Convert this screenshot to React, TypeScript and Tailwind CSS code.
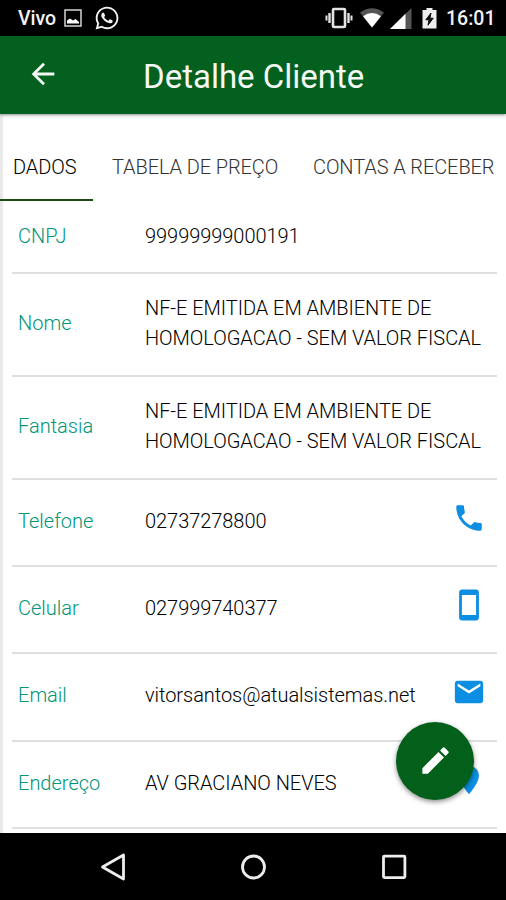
import { type ReactNode } from 'react';
import { FaWhatsapp } from 'react-icons/fa';
import { MdArrowBack, MdEmail, MdModeEdit, MdPhone, MdStayCurrentPortrait } from 'react-icons/md';

type Field = { label: string; lines: string[]; height: string; icon?: ReactNode };

const iconClass = 'w-[34px] h-[34px] text-[#0c8fe2]';

const pin = (
  <svg className={iconClass} viewBox="0 0 24 24" fill="currentColor">
    <path d="M12 2C8.13 2 5 5.13 5 9c0 5.25 7 13 7 13s7-7.75 7-13c0-3.87-3.13-7-7-7z" />
  </svg>
);

const fields: Field[] = [
  { label: 'CNPJ', lines: ['99999999000191'], height: 'h-[73px] pt-[2px]' },
  { label: 'Nome', lines: ['NF-E EMITIDA EM AMBIENTE DE', 'HOMOLOGACAO - SEM VALOR FISCAL'], height: 'h-[103px]' },
  { label: 'Fantasia', lines: ['NF-E EMITIDA EM AMBIENTE DE', 'HOMOLOGACAO - SEM VALOR FISCAL'], height: 'h-[103px]' },
  { label: 'Telefone', lines: ['02737278800'], height: 'h-[87px]', icon: <MdPhone className={iconClass} /> },
  { label: 'Celular', lines: ['027999740377'], height: 'h-[87px]', icon: <MdStayCurrentPortrait className={iconClass} /> },
  { label: 'Email', lines: ['vitorsantos@atualsistemas.net'], height: 'h-[88px]', icon: <MdEmail className={iconClass} /> },
  { label: 'Endereço', lines: ['AV GRACIANO NEVES'], height: 'h-[87px]', icon: pin },
];

function StatusBar() {
  return (
    <div className="flex h-9 shrink-0 items-center bg-black pl-[18px] pr-[11px] text-[#f2f2f2]">
      <span className="w-[46px] pt-[2px] text-[19.5px] font-medium leading-none">Vivo</span>
      <svg className="h-[18px] w-[18px]" viewBox="0 0 18 18" fill="none">
        <rect x="1" y="1" width="16" height="16" stroke="#c8c8c8" strokeWidth="1.6" />
        <path d="M3 14.5v-3l3-2 3 2 2.5-1.5 3.5 3v1.5z" fill="#fff" />
      </svg>
      <FaWhatsapp className="ml-[12px] h-[26px] w-[26px]" />
      <div className="ml-auto flex items-center">
        <svg className="h-[22px] w-[28px]" viewBox="0 0 28 22" fill="none" stroke="#e4e4e4">
          <rect x="8" y="2" width="12" height="18" rx="1" strokeWidth="2.6" />
          <path d="M4.5 6v10M23.5 6v10" strokeWidth="2.4" />
          <path d="M1.5 8.5v5M26.5 8.5v5" strokeWidth="2" />
        </svg>
        <svg className="ml-[7px] h-[20px] w-[24px]" viewBox="0 0 24 20">
          <path d="M0 4.5Q12-4 24 4.5L12 19.5z" fill="#555" />
          <path d="M3 8.2Q12 1.8 21 8.2L12 19.5z" fill="#fff" />
        </svg>
        <svg className="ml-[6px] h-[21px] w-[22px]" viewBox="0 0 22 21">
          <path d="M0 21L21.5 0v21z" fill="#555" />
          <path d="M0 21L15.5 5.8V21z" fill="#fff" />
        </svg>
        <svg className="ml-[10px] h-[21px] w-[15px]" viewBox="0 0 15 21">
          <path d="M4.5 0h6v2H14.5v18.5H.5V2h4z" fill="#eee" />
          <path d="M9 5L3.8 11.8h3.1L6 17.2l5.2-7H8z" fill="#111" stroke="#111" />
        </svg>
        <span className="ml-[9px] w-[49px] pt-[2px] text-[19.5px] font-medium leading-none">16:01</span>
      </div>
    </div>
  );
}

function Header() {
  return (
    <header className="z-10 flex h-[78px] shrink-0 items-center bg-[#03601e] text-[#f4f8f4] shadow-[0_1px_3px_rgba(0,0,0,0.45)]">
      <MdArrowBack className="ml-[26px] mt-[-3px] h-[34px] w-[34px]" />
      <h1 className="ml-[83px] whitespace-nowrap pt-[2px] text-[33px] leading-none">Detalhe Cliente</h1>
    </header>
  );
}

function Tabs() {
  return (
    <nav className="flex h-[87px] shrink-0 items-end whitespace-nowrap text-[20px] font-light leading-none tracking-[-0.1px] text-[#333]">
      <div className="flex h-[67px] w-[93px] items-center border-b-2 border-[#1c4a17] pl-[13px] text-black">DADOS</div>
      <div className="flex h-[67px] w-[201px] items-center border-b-2 border-transparent pl-[19px]">TABELA DE PREÇO</div>
      <div className="flex h-[67px] items-center border-b-2 border-transparent pl-[19px]">CONTAS A RECEBER</div>
    </nav>
  );
}

function Row({ field }: { field: Field }) {
  return (
    <div className={`ml-[12px] mr-[9px] flex shrink-0 items-center whitespace-nowrap border-b-2 border-[#dfdfdf] pb-[2px] text-[20px] font-light leading-[29.5px] ${field.height}`}>
      <span className="w-[133px] pl-[6px] text-[#009478]">{field.label}</span>
      <div className="tracking-[-0.05px] text-black">
        {field.lines.map((line) => <p key={line}>{line}</p>)}
      </div>
      {field.icon && <div className="ml-auto mr-[11px] mt-[-8px]">{field.icon}</div>}
    </div>
  );
}

export default function App() {
  return (
    <div className="relative flex h-[900px] w-[506px] flex-col overflow-hidden bg-white font-['Roboto',sans-serif]">
      <StatusBar />
      <Header />
      <main className="flex h-[719px] shrink-0 flex-col overflow-hidden bg-[linear-gradient(90deg,#e9e9e9_3px,white_3px)]">
        <Tabs />
        {fields.map((field) => <Row key={field.label} field={field} />)}
      </main>
      <button className="absolute left-[396px] top-[722px] flex h-[78px] w-[78px] items-center justify-center rounded-full bg-[#03601a] text-white shadow-[0_2px_5px_rgba(0,0,0,0.45)]">
        <MdModeEdit className="mt-[-2px] h-[35px] w-[35px]" />
      </button>
      <div className="flex h-[67px] shrink-0 items-center justify-between bg-black pl-[100px] pr-[98px]">
        <svg className="h-[28px] w-[28px]" viewBox="0 0 28 28" fill="none" stroke="#eee" strokeWidth="2.8">
          <path d="M2.5 14L23.5 2v24z" strokeLinejoin="round" />
        </svg>
        <svg className="h-[28px] w-[28px]" viewBox="0 0 28 28" fill="none" stroke="#eee" strokeWidth="2.8">
          <circle cx="13.5" cy="14" r="11" />
        </svg>
        <svg className="h-[28px] w-[28px]" viewBox="0 0 28 28" fill="none" stroke="#eee" strokeWidth="2.8">
          <rect x="3.5" y="3.2" width="21.4" height="21.4" rx="1" />
        </svg>
      </div>
    </div>
  );
}
